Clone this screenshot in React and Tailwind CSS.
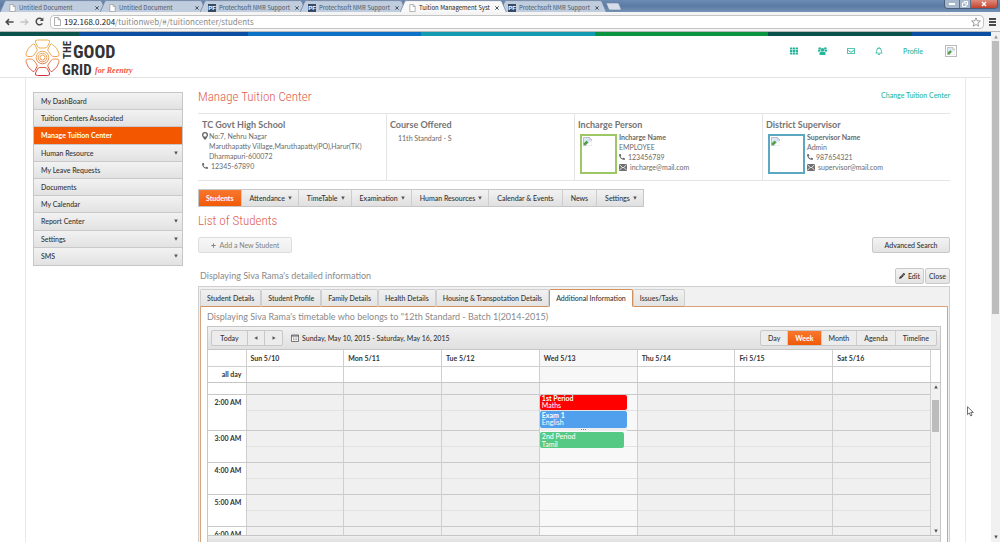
import React from "react";
import { FaTh, FaRegEnvelope, FaRegBell, FaPhoneAlt, FaPlus, FaPencilAlt } from "react-icons/fa";

const BROWSER_TABS = [
  { title: "Untitled Document", icon: "page" },
  { title: "Untitled Document", icon: "page" },
  { title: "Protechsoft NMR Support", icon: "pf" },
  { title: "Protechsoft NMR Support", icon: "pf" },
  { title: "Tuition Management Syst", icon: "page", active: true },
  { title: "Protechsoft NMR Support", icon: "pf" },
];

const SIDE_ITEMS = [
  { label: "My DashBoard" },
  { label: "Tuition Centers Associated" },
  { label: "Manage Tuition Center", active: true },
  { label: "Human Resource", sub: true },
  { label: "My Leave Requests" },
  { label: "Documents" },
  { label: "My Calendar" },
  { label: "Report Center", sub: true },
  { label: "Settings", sub: true },
  { label: "SMS", sub: true },
];

const MENU = [
  { label: "Students", active: true },
  { label: "Attendance", sub: true },
  { label: "TimeTable", sub: true },
  { label: "Examination", sub: true },
  { label: "Human Resources", sub: true },
  { label: "Calendar & Events" },
  { label: "News" },
  { label: "Settings", sub: true },
];

const DETAIL_TABS = [
  "Student Details",
  "Student Profile",
  "Family Details",
  "Health Details",
  "Housing & Transpotation Details",
  "Additional Information",
  "Issues/Tasks",
];

const DAYS = ["Sun 5/10", "Mon 5/11", "Tue 5/12", "Wed 5/13", "Thu 5/14", "Fri 5/15", "Sat 5/16"];
const VIEWS = ["Day", "Week", "Month", "Agenda", "Timeline"];

const HOURS = [
  { label: "2:00 AM", top: "h-4", bottom: "h-5" },
  { label: "3:00 AM", top: "h-4", bottom: "h-4" },
  { label: "4:00 AM", top: "h-4", bottom: "h-4" },
  { label: "5:00 AM", top: "h-4", bottom: "h-4" },
  { label: "6:00 AM", top: "h-4", bottom: "h-4" },
];

function PageIcon({ className }) {
  return (
    <svg viewBox="0 0 7 9" className={className} aria-hidden="true">
      <path d="M.5.5h3.7l2.3 2.3v5.7h-6z" fill="#fff" stroke="#8c8c8c" strokeWidth=".7" />
      <path d="M4.2.5v2.3h2.3" fill="none" stroke="#8c8c8c" strokeWidth=".7" />
    </svg>
  );
}

function BrowserTab({ tab }) {
  return (
    <div className={"relative flex h-3 w-[100px] items-center pt-1 pl-2 " + (tab.active ? "z-10" : "")}>
      <svg viewBox="0 0 108 12" className="absolute top-0 left-0 h-3 w-[108px]" aria-hidden="true">
        <path
          d="M0 12.5 4.5 2Q5 .6 6.500 .6H100Q101.500 .6 102 2L106.500 12.500"
          fill={tab.active ? "#f8f8f8" : "#c0cddf"}
          stroke="#71839c"
          strokeWidth=".8"
        />
      </svg>
      {tab.icon === "page" ? (
        <PageIcon className="relative ml-px h-2 w-[7px]" />
      ) : (
        <span className="relative flex size-2 items-center justify-center bg-[#394b63] font-['Liberation_Sans'] text-[6px] leading-2 font-bold text-white">
          PF
        </span>
      )}
      <span
        className={
          "relative ml-[3px] w-[74px] font-['Noto_Sans_CJK_SC',sans-serif] text-[6px] leading-2 whitespace-nowrap " +
          (tab.active ? "text-[#222]" : "text-[#4d5764]")
        }
      >
        {tab.title}
      </span>
      <button aria-label={"Close " + tab.title} className="relative ml-0.5 size-1">
        <svg viewBox="0 0 4 4" className="size-1">
          <path d="M.3.3l3.400 3.400M3.700.3.300 3.700" stroke="#4b5563" strokeWidth="1" />
        </svg>
      </button>
    </div>
  );
}

function BrowserChrome() {
  return (
    <>
      <div className="flex h-3 justify-between bg-gradient-to-b from-[#6d8bb3] via-[#5a7aa4] to-[#7692b6]">
        <div className="flex">
          {BROWSER_TABS.map((tab, i) => (
            <BrowserTab key={i} tab={tab} />
          ))}
          <button aria-label="New tab" className="ml-[6px] h-3 w-4">
            <svg viewBox="0 0 16 12" className="h-3 w-4">
              <path d="M.5 4Q0 3 1 3H11.500Q12.500 3 13 4L15 9Q15.400 10 14.500 10H4Q3 10 2.600 9z" fill="#d6dee9" stroke="#6d819c" strokeWidth=".6" />
            </svg>
          </button>
        </div>
        <div className="mr-0.5 flex h-[9px] w-[54px] overflow-hidden rounded-b border border-t-0 border-[#4d5f78]">
          <button aria-label="Minimize" className="flex w-[14px] items-center justify-center bg-[#a6b7cd]">
            <span className="h-0.5 w-1.5 bg-white" />
          </button>
          <button aria-label="Restore" className="flex w-3 items-center justify-center border-x border-[#5d6f89] bg-[#a6b7cd]">
            <svg viewBox="0 0 6 6" className="size-1.5">
              <path d="M2 1.500V.5h3.500v3.500h-1M.5 2h3.500v3.500h-3.500z" fill="none" stroke="#fff" strokeWidth="1" />
            </svg>
          </button>
          <button aria-label="Close window" className="flex flex-1 items-center justify-center bg-gradient-to-b from-[#dd8a7b] to-[#c3402a]">
            <svg viewBox="0 0 6 6" className="size-1.5">
              <path d="M1 1l4 4M5 1 1 5" stroke="#fff" strokeWidth="1.500" />
            </svg>
          </button>
        </div>
      </div>
      <div className="flex h-5 items-center gap-[6px] border-b border-[#b9b9b9] bg-[#f4f4f4] pr-1 pl-[5px]">
        <button aria-label="Back">
          <svg viewBox="0 0 10 8" className="h-2 w-[9px]">
            <path d="M9.500 4H1.500M4.500.8 1.300 4l3.200 3.200" fill="none" stroke="#4a4a4a" strokeWidth="1.700" />
          </svg>
        </button>
        <button aria-label="Forward">
          <svg viewBox="0 0 10 8" className="h-2 w-[9px]">
            <path d="M.5 4h8M5.500.8 8.700 4 5.500 7.200" fill="none" stroke="#c4c4c4" strokeWidth="1.500" />
          </svg>
        </button>
        <button aria-label="Reload">
          <svg viewBox="0 0 9 9" className="size-[9px]">
            <path d="M7.300 6.300A3.300 3.300 0 1 1 7 2.400" fill="none" stroke="#4a4a4a" strokeWidth="1.500" />
            <path d="M8.400.4v3.600H4.800z" fill="#4a4a4a" />
          </svg>
        </button>
        <div className="flex h-[14px] flex-1 items-center rounded-sm border border-[#c4c4c4] bg-white pr-0.5 pl-[3px]">
          <PageIcon className="h-[9px] w-[7px]" />
          <p className="ml-[3px] flex-1 font-['Noto_Sans_CJK_SC',sans-serif] text-[8px] leading-3 text-[#8a8a8a]">
            <span className="text-[#222]">192.168.0.204</span>/tuitionweb/#/tuitioncenter/students
          </p>
          <button aria-label="Bookmark this page">
            <svg viewBox="0 0 10 10" className="size-[10px]">
              <path d="M5 .8 6.200 3.800l3.200.2-2.500 2 .8 3.200L5 7.500 2.300 9.200l.8-3.200L.6 4l3.200-.2z" fill="#fff" stroke="#777" strokeWidth=".7" />
            </svg>
          </button>
        </div>
        <button aria-label="Menu" className="-ml-px flex flex-col gap-px">
          <span className="h-0.5 w-[7px] bg-[#4a4a4a]" />
          <span className="h-0.5 w-[7px] bg-[#4a4a4a]" />
          <span className="h-0.5 w-[7px] bg-[#4a4a4a]" />
        </button>
      </div>
    </>
  );
}

function Logo() {
  return (
    <svg viewBox="0 0 112 40" className="h-10 w-28 overflow-visible" role="img" aria-label="The Good Grid for Reentry">
      <defs>
        <linearGradient id="petals" gradientUnits="userSpaceOnUse" x1="0" y1="1" x2="0" y2="38">
          <stop offset="0" stopColor="#e9b24a" />
          <stop offset=".5" stopColor="#eda35b" />
          <stop offset="1" stopColor="#cf2b3c" />
        </linearGradient>
      </defs>
      <g fill="none" stroke="url(#petals)" strokeWidth="1">
        <circle cx="17.500" cy="19.500" r="2.500" />
        <circle cx="17.500" cy="19.500" r="4.300" />
        <circle cx="17.500" cy="19.500" r="6.300" />
        <path d="M12.500 2h10q3 0 2 2.500l-2 4q-.8 1.500-2.500 1.500h-5q-1.700 0-2.500-1.500l-2-4q-1-2.500 2-2.500z" />
        <path d="M12.500 37.500h10q3 0 2-2.500l-2-4q-.8-1.500-2.500-1.500h-5q-1.700 0-2.500 1.500l-2 4q-1 2.500 2 2.500z" />
        <path d="M7.500 6.500q1.500-1.500 2.500.5l2 4q.5 1.500-.5 2.500l-3 4q-1 1-2.500 1H3q-2.500 0-2-3 1.500-6 6.500-9z" />
        <path d="M27.500 6.500q-1.500-1.500-2.500.5l-2 4q-.5 1.500.5 2.500l3 4q1 1 2.500 1H32q2.500 0 2-3-1.500-6-6.500-9z" />
        <path d="M7.500 33q1.500 1.500 2.500-.5l2-4q.5-1.500-.5-2.500l-3-4q-1-1-2.500-1H3q-2.500 0-2 3 1.500 6 6.500 9z" />
        <path d="M27.500 33q-1.500 1.500-2.500-.5l-2-4q-.5-1.500.5-2.500l3-4q1-1 2.500-1H32q2.500 0 2 3-1.500 6-6.500 9z" />
      </g>
      <g fill="#333" className="font-['Roboto_Condensed',Roboto,sans-serif] font-bold">
        <text x="-21" y="46" transform="rotate(-90)" fontSize="11">THE</text>
        <text x="48" y="20" fontSize="18">GOOD</text>
        <text x="37" y="37" fontSize="15">GRID</text>
      </g>
      <text x="70" y="35" fontSize="8" fill="#ee5a45" className="font-['Liberation_Serif',serif] font-bold italic">
        for Reentry
      </text>
    </svg>
  );
}

function PeopleIcon() {
  return (
    <svg viewBox="0 0 16 14" className="h-2 w-[9px]" fill="currentColor" aria-hidden="true">
      <circle cx="8" cy="5" r="3.200" />
      <circle cx="3" cy="2.500" r="2.300" />
      <circle cx="13" cy="2.500" r="2.300" />
      <path d="M3.500 14q-1-.2-1-2 0-4 2.500-4.200 3 2 6 0 2.500.2 2.500 4.200 0 1.800-1 2z" />
      <path d="M0 7q0-2.300 1.200-2.500 1.300.8 2.800.5 0 1.500.8 2.200Q3.500 7.200 2.500 8.200H1Q0 8.200 0 7zM16 7q0-2.300-1.200-2.500-1.300.8-2.800.5 0 1.500-.8 2.200 1.300 0 2.300 1H15q1 0 1-1.200z" />
    </svg>
  );
}

function BrokenImage({ className }) {
  return (
    <svg viewBox="0 0 10 10" className={className} aria-hidden="true">
      <path d="M.5.5h6.500l2.500 2.500v6.500h-9z" fill="#dbe8f7" stroke="#a9a9a9" strokeWidth=".8" />
      <path d="M1 9V7l3-3 2 2-3 3z" fill="#4da03c" />
      <path d="M3.500 9.800 9.800 4v5.800z" fill="#fff" />
      <path d="M7 .5v2.500h2.500z" fill="#fff" stroke="#a9a9a9" strokeWidth=".5" />
    </svg>
  );
}

function Caret({ className = "" }) {
  return (
    <svg viewBox="0 0 4 4" className={"size-1 " + className} aria-hidden="true">
      <path d="M.2.5h3.600L2 3.700z" fill="#555" />
    </svg>
  );
}

function SiteHeader() {
  return (
    <header className="flex h-[42px] items-start justify-between border-b border-[#e3e3e3] bg-white pt-0.5 pr-[34px] pl-[25px]">
      <a href="#home"><Logo /></a>
      <nav className="flex items-center pt-[7px] text-[#26b59b]">
        <a href="#apps" aria-label="Apps" className="mr-5"><FaTh className="size-2" /></a>
        <a href="#people" aria-label="People" className="mr-5"><PeopleIcon /></a>
        <a href="#mail" aria-label="Mail" className="mr-5"><FaRegEnvelope className="size-2" /></a>
        <a href="#alerts" aria-label="Notifications" className="mr-5"><FaRegBell className="size-2" /></a>
        <a href="#profile" className="mr-[22px] text-[7px] leading-[10px] font-medium">Profile</a>
        <a href="#account" aria-label="Account" className="border border-[#bbb] p-px"><BrokenImage className="size-2" /></a>
      </nav>
    </header>
  );
}

function Sidebar() {
  return (
    <nav className="w-[150px] shrink-0">
      <ul className="grid h-[174px] grid-rows-10 border border-[#c6c6c6]">
        {SIDE_ITEMS.map((item) => (
          <li key={item.label} className="flex border-b border-[#c9c9c9] last:border-b-0">
            <a
              href="#menu"
              className={
                "flex flex-1 items-center justify-between pr-1 pl-[7px] text-[7px] leading-2 " +
                (item.active
                  ? "bg-[#f35800] font-bold text-white"
                  : "bg-gradient-to-b from-[#f2f2f2] to-[#e2e2e2] font-medium text-[#333]")
              }
            >
              {item.label}
              {item.sub && <Caret />}
            </a>
          </li>
        ))}
      </ul>
    </nav>
  );
}

function MailIcon() {
  return (
    <svg viewBox="0 0 8 7" className="h-[7px] w-2 shrink-0" aria-hidden="true">
      <path d="M0 0h8v7H0z" fill="#6f6f6f" />
      <path d="M.3.600 4 4 7.700.6M.3 6.400 3 3.500M7.700 6.400 5 3.500" fill="none" stroke="#fff" strokeWidth=".8" />
    </svg>
  );
}

function Person({ heading, frame, nameLabel, name, phone, mail }) {
  return (
    <section className="border-l border-[#e4e4e4] pl-[3px]">
      <h3 className="text-[9px] leading-3 font-bold text-[#747474]">{heading}</h3>
      <div className="mt-[3px] flex gap-0.5 pl-0.5">
        <div className={"h-10 w-[37px] border-2 p-px " + frame}>
          <BrokenImage className="size-[9px]" />
        </div>
        <div className="-mt-0.5 text-[7px] leading-[10px]">
          <h4 className="font-bold">{nameLabel}</h4>
          <p>{name}</p>
          <p className="flex items-center gap-[3px]"><FaPhoneAlt className="size-1.5" />{phone}</p>
          <p className="flex items-center gap-[3px]"><MailIcon />{mail}</p>
        </div>
      </div>
    </section>
  );
}

function CenterInfo() {
  return (
    <div className="grid h-[68px] grid-cols-4 border-y border-[#e4e4e4] text-[#6a6a6a] [&>section]:pt-[5px]">
      <section className="pl-1">
        <h3 className="text-[9px] leading-3 font-bold text-[#747474]">TC Govt High School</h3>
        <address className="text-[7px] leading-[10px] not-italic">
          <div className="flex gap-px">
            <svg viewBox="0 0 6 8" className="mt-px h-2 w-1.5 shrink-0" aria-hidden="true">
              <path d="M3 0a3 3 0 0 1 3 3Q6 4.500 3 8 0 4.500 0 3A3 3 0 0 1 3 0zM3 1.300a1.700 1.700 0 1 0 0 3.400 1.700 1.700 0 0 0 0-3.400z" fill="#666" fillRule="evenodd" />
            </svg>
            <p className="whitespace-nowrap">No:7, Nehru Nagar<br />Maruthapatty Village,Maruthapatty(PO),Harur(TK)<br />Dharmapuri-600072</p>
          </div>
          <p className="flex items-center gap-[3px]"><FaPhoneAlt className="size-1.5" />12345-67890</p>
        </address>
      </section>
      <section className="border-l border-[#e4e4e4] pl-[3px]">
        <h3 className="text-[9px] leading-3 font-bold text-[#747474]">Course Offered</h3>
        <p className="pt-0.5 pl-2 text-[7px] leading-[10px]">11th Standard - S</p>
      </section>
      <Person heading="Incharge Person" frame="border-[#9dc765]" nameLabel="Incharge Name" name="EMPLOYEE" phone="123456789" mail="incharge@mail.com" />
      <Person heading="District Supervisor" frame="border-[#5ca8c2]" nameLabel="Supervisor Name" name="Admin" phone="987654321" mail="supervisor@mail.com" />
    </div>
  );
}

const BTN = "flex items-center justify-center rounded-xs border border-[#c8c8c8] bg-gradient-to-b from-[#f3f3f3] to-[#e3e3e3] text-[7px] leading-2 font-medium text-[#333]";

function CenterMenu() {
  return (
    <ul className="flex h-[18px] w-fit border border-[#c6c6c6] bg-gradient-to-b from-[#f2f2f2] to-[#e0e0e0]">
      {MENU.map((m, i) => (
        <li key={i} className="flex border-r border-[#cdcdcd] last:border-r-0">
          <a
            href="#section"
            className={
              "flex items-center gap-[3px] text-[7px] leading-2 whitespace-nowrap " +
              (m.sub ? "pr-1.5 pl-2 " : m.active ? "px-[7px] " : "px-2 ") +
              (m.active ? "bg-gradient-to-b from-[#f8772c] to-[#f05a04] font-bold text-white" : "font-medium text-[#333]")
            }
          >
            {m.label}
            {m.sub && <Caret />}
          </a>
        </li>
      ))}
    </ul>
  );
}

function SchedulerToolbar() {
  return (
    <div className="flex h-[22px] items-center bg-gradient-to-b from-[#f1f1f1] to-[#e0e0e0] px-[3px] text-[7px] leading-2 font-medium text-[#333]">
      <div className="flex h-4 rounded-xs border border-[#c8c8c8] bg-[#ececec]">
        <button className="w-[35px]">Today</button>
        <button aria-label="Previous" className="flex w-[18px] items-center justify-center border-x border-[#c8c8c8]"><Caret className="rotate-90" /></button>
        <button aria-label="Next" className="flex w-[17px] items-center justify-center"><Caret className="-rotate-90" /></button>
      </div>
      <svg viewBox="0 0 8 8" className="ml-2 size-2" aria-hidden="true">
        <path d="M.5 1h7v6.500h-7z" fill="#fff" stroke="#555" strokeWidth=".8" />
        <path d="M.5 2h7" stroke="#555" strokeWidth="1" />
        <path d="M2 4h4.500M2 5.700h4.500" stroke="#777" strokeWidth=".9" strokeDasharray="1 .6" />
      </svg>
      <p className="ml-[3px] flex-1">Sunday, May 10, 2015 - Saturday, May 16, 2015</p>
      <div className="flex h-4 rounded-xs border border-[#c8c8c8] bg-[#ececec]">
        {VIEWS.map((v) => (
          <button
            key={v}
            className={
              "border-r border-[#cfcfcf] px-[7px] last:border-r-0 " +
              (v === "Week" ? "bg-gradient-to-b from-[#f8772c] to-[#f05a04] font-bold text-white" : "")
            }
          >
            {v}
          </button>
        ))}
      </div>
    </div>
  );
}

function Columns() {
  return (
    <colgroup>
      <col className="w-[38px]" />
      {DAYS.map((d) => (
        <col key={d} />
      ))}
    </colgroup>
  );
}

function Events() {
  return (
    <div className="absolute top-0 left-0 z-10 w-[87px] text-[7px] leading-[7px] text-white">
      <div className="h-[15px] rounded-xs bg-[#fe0000] px-0.5"><b>1st Period</b><p>Maths</p></div>
      <div className="mt-px h-[17px] rounded-xs bg-[#51a0ed] px-0.5 pt-px"><b>Exam 1</b><p>English</p></div>
      <div className="flex h-[3px] items-start justify-center gap-px bg-[#eee] pt-px">
        <i className="size-px bg-[#888]" /><i className="size-px bg-[#888]" /><i className="size-px bg-[#888]" />
      </div>
      <div className="mt-px h-4 w-[84px] rounded-xs bg-[#56ca85] px-0.5 leading-2"><span className="font-medium">2nd Period</span><p>Tamil</p></div>
    </div>
  );
}

function Scheduler() {
  return (
    <div className="border border-[#c6c6c6]">
      <SchedulerToolbar />
      <div className="border-t border-[#c6c6c6] pr-[9px]">
        <table className="w-full table-fixed border-collapse text-left text-[7px] leading-2 text-[#333]">
          <Columns />
          <thead>
            <tr className="h-4">
              <th />
              {DAYS.map((d) => (
                <th key={d} className={"border-x border-[#cfcfcf] p-0 pl-1 font-bold " + (d === "Wed 5/13" ? "bg-[#f7f7f7]" : "")}>{d}</th>
              ))}
            </tr>
          </thead>
          <tbody>
            <tr className="h-4 border-t border-[#cfcfcf]">
              <th className="p-0 pr-1 text-right font-bold">all day</th>
              {DAYS.map((d) => (
                <td key={d} className={"border-x border-[#cfcfcf] " + (d === "Wed 5/13" ? "bg-[#f7f7f7]" : "")} />
              ))}
            </tr>
          </tbody>
        </table>
      </div>
      <div className="flex h-[153px] overflow-hidden border-t border-[#c6c6c6]">
        <div className="min-w-0 flex-1">
          <table className="w-full table-fixed border-collapse text-[7px] leading-2 text-[#333]">
            <Columns />
            <tbody>
              <tr>
                <th className="h-[11px] p-0" />
                {DAYS.map((d) => (
                  <td key={d} className={"border-x border-[#cfcfcf] p-0 " + (d === "Wed 5/13" ? "bg-[#f8f8f8]" : "bg-[#f0f0f0]")} />
                ))}
              </tr>
              {HOURS.map((h) => (
                <React.Fragment key={h.label}>
                  <tr className="border-t border-[#c9c9c9]">
                    <th rowSpan={2} className="p-0 pt-[3px] pr-1 text-right align-top font-bold">{h.label}</th>
                    {DAYS.map((d) => (
                      <td key={d} className={"relative border-x border-[#cfcfcf] p-0 " + h.top + (d === "Wed 5/13" ? " bg-[#f8f8f8] bg-clip-padding" : " bg-[#f0f0f0] bg-clip-padding")}>
                        {d === "Wed 5/13" && h.label === "2:00 AM" && <Events />}
                      </td>
                    ))}
                  </tr>
                  <tr>
                    {DAYS.map((d) => (
                      <td key={d} className={"border-x border-t border-x-[#cfcfcf] border-t-[#e2e2e2] p-0 " + h.bottom + (d === "Wed 5/13" ? " bg-[#f8f8f8]" : " bg-[#f0f0f0]")} />
                    ))}
                  </tr>
                </React.Fragment>
              ))}
            </tbody>
          </table>
        </div>
        <div className="flex w-[9px] flex-col items-center bg-[#f1f1f1] py-0.5">
          <Caret className="rotate-180" />
          <div className="mt-[11px] h-8 w-[7px] bg-[#bcbcbc]" />
          <Caret className="mt-auto" />
        </div>
      </div>
      <div className="h-[7px] border-t border-[#c6c6c6] bg-gradient-to-b from-[#efefef] to-[#e0e0e0]" />
    </div>
  );
}

function StudentDetails() {
  return (
    <div className="border border-[#cfcfcf] bg-[#f1f1f1] p-px pt-0.5 pb-0">
      <div role="tablist" className="relative z-10 flex h-[18px] text-[7px] leading-2 font-medium text-[#333]">
        {DETAIL_TABS.map((t) => (
          <button
            key={t}
            role="tab"
            aria-selected={t === "Additional Information"}
            className={
              "rounded-t-xs border px-1.5 whitespace-nowrap " +
              (t === "Additional Information"
                ? "border-[#d3905a] border-b-white bg-white"
                : "border-[#cfcfcf] border-b-[#d3905a] bg-gradient-to-b from-[#f1f1f1] to-[#e3e3e3]")
            }
          >
            {t}
          </button>
        ))}
      </div>
      <div className="-mt-px border border-[#dba27a] bg-white px-1.5 pt-1 pb-10">
        <h3 className="mb-[3px] text-[9px] leading-3 text-[#8a8a8a]">
          Displaying Siva Rama's timetable who belongs to "12th Standard - Batch 1(2014-2015)
        </h3>
        <Scheduler />
      </div>
    </div>
  );
}

function MainPanel() {
  return (
    <main className="min-w-0 flex-1">
      <div className="flex h-[21px] items-start justify-between">
        <h1 className="font-['Roboto_Condensed',Roboto,sans-serif] text-[13px] leading-[10px] font-light text-[#e0604f]">Manage Tuition Center</h1>
        <a href="#change" className="text-[7px] leading-[6px] font-medium text-[#26b59b]">Change Tuition Center</a>
      </div>
      <CenterInfo />
      <div className="mt-2"><CenterMenu /></div>
      <h2 className="mt-1.5 font-['Roboto_Condensed',Roboto,sans-serif] text-[13px] leading-4 font-light text-[#e0604f]">List of Students</h2>
      <div className="mt-2 flex h-4 justify-between">
        <button disabled className={BTN + " w-[94px] gap-1 opacity-60"}>
          <FaPlus className="size-[5px]" />Add a New Student
        </button>
        <button className={BTN + " w-[78px]"}>Advanced Search</button>
      </div>
      <div className="mt-[15px] mb-0.5 flex h-4 items-center justify-between">
        <h3 className="pl-0.5 text-[9px] leading-3 text-[#8a8a8a]">Displaying Siva Rama's detailed information</h3>
        <div className="flex h-4 gap-px">
          <button className={BTN + " w-[29px] gap-[3px]"}><FaPencilAlt className="size-1.5" />Edit</button>
          <button className={BTN + " w-[25px]"}>Close</button>
        </div>
      </div>
      <StudentDetails />
    </main>
  );
}

function PageScrollbar() {
  return (
    <div className="flex w-[9px] shrink-0 flex-col items-center bg-[#f1f1f1] py-[3px]">
      <Caret className="rotate-180 opacity-60" />
      <div className="mt-0.5 h-[273px] w-[7px] bg-[#bcbcbc]" />
      <Caret className="mt-auto" />
    </div>
  );
}

export default function App() {
  return (
    <div className="relative flex h-screen flex-col overflow-hidden bg-white font-[Lato,'Noto_Sans_CJK_SC',sans-serif] [&_a]:no-underline">
      <BrowserChrome />
      <div className="flex min-h-0 flex-1">
        <div className="min-w-0 flex-1">
          <div className="flex h-1">
            <span className="w-[8%] bg-[#0d514c]" />
            <span className="w-[17%] bg-[#0b4ea2]" />
            <span className="w-[17.500%] bg-[#0b72c8]" />
            <span className="w-[17.500%] bg-[#129bb0]" />
            <span className="w-[17.500%] bg-[#0a9440]" />
            <span className="w-[14.500%] bg-[#0d514c]" />
            <span className="flex-1 bg-[#0b4ea2]" />
          </div>
          <SiteHeader />
          <div className="mr-[25px] ml-[25px] flex gap-[15px] border-x border-[#e8e8e8] pt-[14px] pr-[15px] pl-[7px]">
            <Sidebar />
            <MainPanel />
          </div>
        </div>
        <PageScrollbar />
      </div>
      <svg viewBox="0 0 8 12" className="absolute top-[406px] left-[967px] h-[11px] w-[7px]" aria-hidden="true">
        <path d="M.6.6v9l2.100-2 1.400 3.400 1.600-.7-1.400-3.200h3z" fill="#fff" stroke="#333" strokeWidth=".8" />
      </svg>
    </div>
  );
}
